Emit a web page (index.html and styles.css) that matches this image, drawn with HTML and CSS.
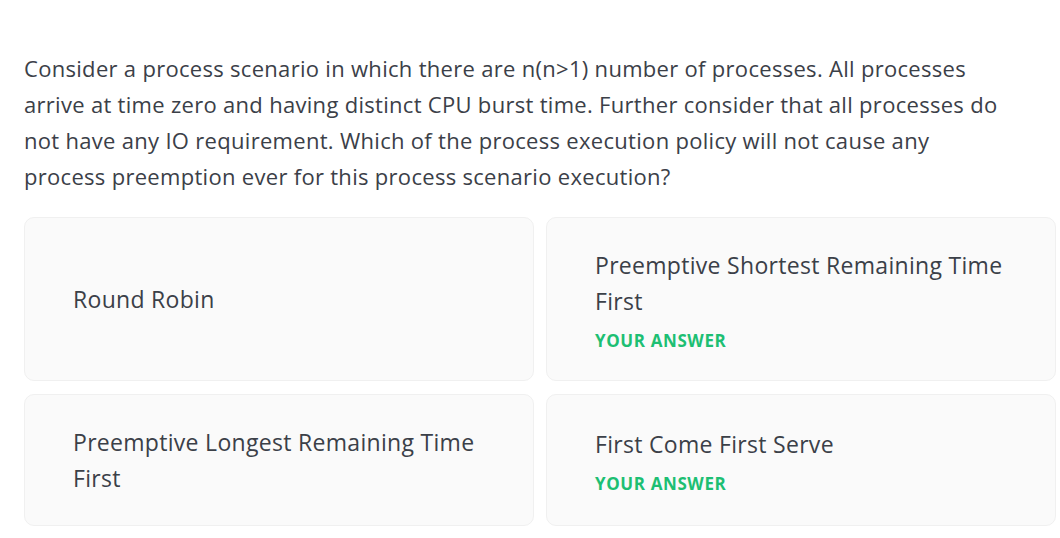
FILE: index.html
```html
<!DOCTYPE html>
<html lang="en">
<head>
<meta charset="utf-8">
<title>Quiz question</title>
<link rel="stylesheet" href="styles.css">
</head>
<body>
<main class="question">
  <p class="prompt">Consider a process scenario in which there are n(n&gt;1) number of processes. All processes<br>arrive at time zero and having distinct CPU burst time. Further consider that all processes do<br>not have any IO requirement. Which of the process execution policy will not cause any<br>process preemption ever for this process scenario execution?</p>
  <div class="options">
    <div class="option">
      <div class="option-text">Round Robin</div>
    </div>
    <div class="option">
      <div class="option-text">Preemptive Shortest Remaining Time First</div>
      <div class="option-tag">YOUR ANSWER</div>
    </div>
    <div class="option">
      <div class="option-text">Preemptive Longest Remaining Time First</div>
    </div>
    <div class="option">
      <div class="option-text">First Come First Serve</div>
      <div class="option-tag">YOUR ANSWER</div>
    </div>
  </div>
</main>
</body>
</html>
```
FILE: styles.css
```css
html, body {
  margin: 0;
  padding: 0;
  background: #ffffff;
}

body {
  font-family: "Open Sans", "Noto Sans", sans-serif;
  color: #3b4048;
}

.question {
  padding: 50px 4px 0 24px;
}

.prompt {
  margin: 0 0 23px 0;
  font-size: 22px;
  line-height: 36px;
  letter-spacing: 0.3px;
  max-width: 1032px;
}

.options {
  display: grid;
  grid-template-columns: 1fr 1fr;
  column-gap: 12px;
  row-gap: 13px;
}

.option {
  display: flex;
  flex-direction: column;
  justify-content: center;
  background: #fafafa;
  border: 1px solid #f0f0f0;
  border-radius: 10px;
  padding: 29px 48px 29px 48px;
}

.option-text {
  font-size: 23px;
  line-height: 36px;
  letter-spacing: 0.3px;
}

.option-tag {
  margin-top: 12px;
  font-size: 17px;
  line-height: 20px;
  font-weight: 700;
  letter-spacing: 0.6px;
  color: #1dbf73;
}
```
